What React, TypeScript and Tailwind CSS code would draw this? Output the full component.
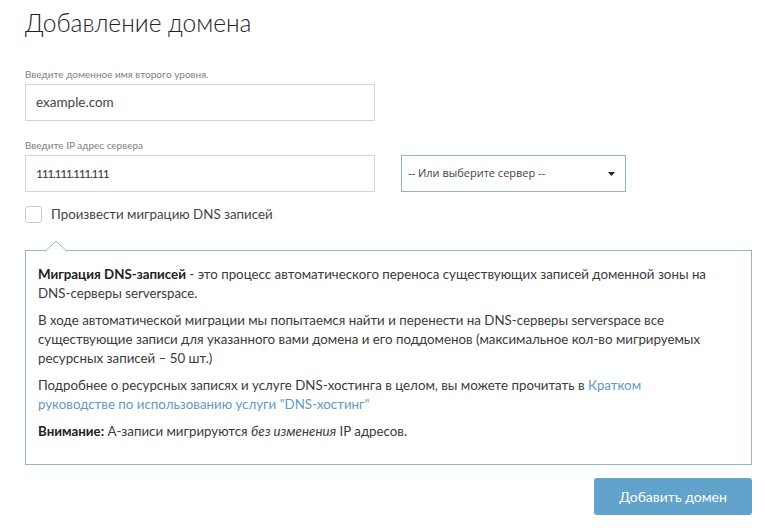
import React from 'react';

const font = { fontFamily: '"Lato", "Noto Sans", sans-serif' };

export default function App(): JSX.Element {
    return (
        <div className="min-h-[528px] w-[765px] bg-white px-[25px] pt-[6px] text-[#333]" style={font}>
            <h1 className="text-[24.5px] font-light leading-[34px] text-[#222]">Добавление домена</h1>

            <div className="mt-[28px]">
                <p className="text-[10px] leading-[12px] text-[#808080]">Введите доменное имя второго уровня.</p>
                <div className="mt-[4px] flex h-[37px] w-[350px] items-center border border-[#d4d4d4] px-[10px] text-[13.5px] text-[#444]">
                    example.com
                </div>
            </div>

            <div className="mt-[18px]">
                <p className="text-[10px] leading-[12px] text-[#808080]">Введите IP адрес сервера</p>
                <div className="mt-[4px] flex items-center gap-[26px]">
                    <div className="flex h-[37px] w-[350px] items-center border border-[#d4d4d4] px-[10px] text-[12px] tracking-[-1.3px] text-[#333]">
                        111.111.111.111
                    </div>
                    <div
                        className="flex h-[37px] w-[225px] items-center justify-between border border-[#8fb4c2] pl-[6px] pr-[10px] text-[11px] text-[#444]"
                        style={{ fontFamily: '"Open Sans", sans-serif' }}
                    >
                        <span>-- Или выберите сервер --</span>
                        <svg width="7" height="4" viewBox="0 0 7 4">
                            <path d="M0 0h7L3.5 4z" fill="#222" />
                        </svg>
                    </div>
                </div>
            </div>

            <label className="mt-[13px] flex items-center gap-[9px]">
                <span className="h-[17px] w-[17px] rounded-[3px] border border-[#ccc] bg-white" />
                <span className="text-[13.3px] text-[#444]">Произвести миграцию DNS записей</span>
            </label>

            <div className="relative mt-[25px] w-[727px] border border-[#95b6c3] px-[12px] pb-[23px] pt-[14px] text-[13.3px] leading-[19px] text-[#3a3a3a]">
                <svg className="absolute -top-[11px] left-[19px]" width="22" height="12" viewBox="0 0 22 12">
                    <path d="M0 11.5 L11 1 L22 11.5" fill="white" stroke="#95b6c3" strokeWidth="1" />
                </svg>
                <p>
                    <b className="font-bold text-[#222]">Миграция DNS-записей</b> - это процесс автоматического переноса существующих записей доменной зоны на DNS-серверы serverspace.
                </p>
                <p className="mt-[8px]">
                    В ходе автоматической миграции мы попытаемся найти и перенести на DNS-серверы serverspace все существующие записи для указанного вами домена и его поддоменов (максимальное кол-во мигрируемых ресурсных записей – 50 шт.)
                </p>
                <p className="mt-[8px]">
                    Подробнее о ресурсных записях и услуге DNS-хостинга в целом, вы можете прочитать в{' '}
                    <a className="text-[#6499c2]">
                        Кратком
                        <br />
                        руководстве по использованию услуги "DNS-хостинг"
                    </a>
                </p>
                <p className="mt-[8px]">
                    <b className="font-bold text-[#222]">Внимание:</b> А-записи мигрируются <i>без изменения</i> IP адресов.
                </p>
            </div>

            <div className="mt-[13px] flex w-[727px] justify-end">
                <button className="h-[37px] w-[158px] rounded-[3px] bg-[#62a3cb] text-[14px] text-white">
                    Добавить домен
                </button>
            </div>
        </div>
    );
}
